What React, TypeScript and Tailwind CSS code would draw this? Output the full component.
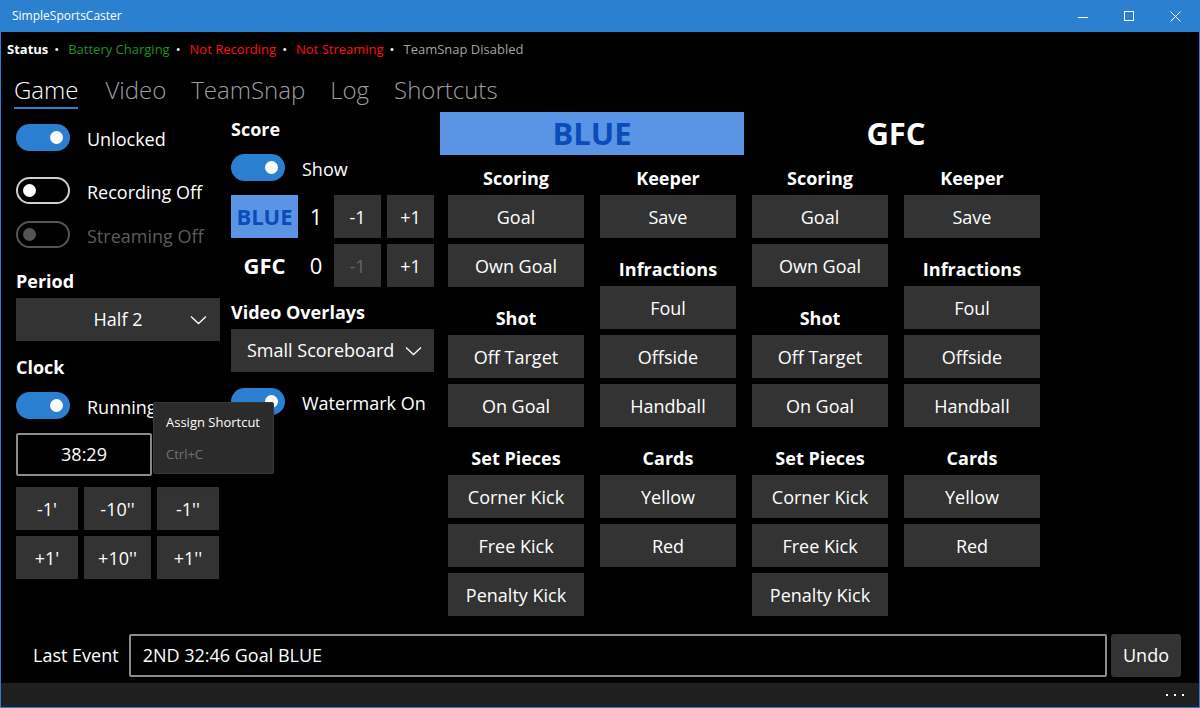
import React from "react";

function Toggle({ on, disabled }: { on?: boolean; disabled?: boolean }) {
  if (on) {
    return (
      <div className="w-[54px] h-[27px] rounded-full bg-[#2b7fd0] flex items-center justify-end pr-[7px] shrink-0">
        <div className="w-[13px] h-[13px] rounded-full bg-white" />
      </div>
    );
  }
  if (disabled) {
    return (
      <div className="w-[54px] h-[27px] rounded-full border-2 border-[#555555] flex items-center pl-[5px] shrink-0">
        <div className="w-[13px] h-[13px] rounded-full bg-[#555555]" />
      </div>
    );
  }
  return (
    <div className="w-[54px] h-[27px] rounded-full border-2 border-[#cfcfcf] flex items-center pl-[5px] shrink-0">
      <div className="w-[13px] h-[13px] rounded-full bg-white" />
    </div>
  );
}

function ToggleRow({ on, disabled, label, className }: { on?: boolean; disabled?: boolean; label: string; className?: string }) {
  return (
    <div className={"flex items-center h-[27px] " + (className ?? "")}>
      <Toggle on={on} disabled={disabled} />
      <span className={"ml-[17px] mt-[2px] text-[18px] leading-[26px] whitespace-nowrap " + (disabled ? "text-[#5c5c5c]" : "text-white")}>{label}</span>
    </div>
  );
}

function Btn({ children, className, disabled }: { children: React.ReactNode; className?: string; disabled?: boolean }) {
  return (
    <div
      className={
        "h-[43px] bg-[#333333] flex items-center justify-center text-[18px] leading-[26px] whitespace-nowrap " +
        (disabled ? "text-[#666666] " : "text-white ") +
        (className ?? "")
      }
    >
      {children}
    </div>
  );
}

function Chevron() {
  return (
    <svg width="17" height="10" viewBox="0 0 17 10" className="shrink-0">
      <polyline points="1,1.5 8.5,8.5 16,1.5" fill="none" stroke="white" strokeWidth="1.3" />
    </svg>
  );
}

function Heading({ children, className }: { children: React.ReactNode; className?: string }) {
  return <div className={"text-[18px] leading-[26px] font-bold text-white " + (className ?? "")}>{children}</div>;
}

function GroupLabel({ children, first }: { children: React.ReactNode; first?: boolean }) {
  return (
    <div
      className={
        (first ? "h-[40px] " : "h-[48px] ") +
        "flex items-end justify-center pb-[4px] text-[18px] leading-[26px] font-bold text-white whitespace-nowrap"
      }
    >
      {children}
    </div>
  );
}

function Group({ label, items, first }: { label: string; items: string[]; first?: boolean }) {
  return (
    <div className="flex flex-col">
      <GroupLabel first={first}>{label}</GroupLabel>
      <div className="flex flex-col gap-[6px]">
        {items.map((it) => (
          <Btn key={it}>{it}</Btn>
        ))}
      </div>
    </div>
  );
}

function Team({ name, highlighted }: { name: string; highlighted?: boolean }) {
  return (
    <div className="w-[304px] flex flex-col">
      <div
        className={
          "h-[43px] flex items-center justify-center text-[31px] font-bold leading-none " +
          (highlighted ? "bg-[#5a95e5] text-[#0b4cb8]" : "text-white")
        }
      >
        {name}
      </div>
      <div className="flex gap-[16px] px-[8px]">
        <div className="w-[136px] flex flex-col">
          <Group first label="Scoring" items={["Goal", "Own Goal"]} />
          <Group label="Shot" items={["Off Target", "On Goal"]} />
          <Group label="Set Pieces" items={["Corner Kick", "Free Kick", "Penalty Kick"]} />
        </div>
        <div className="w-[136px] flex flex-col">
          <Group first label="Keeper" items={["Save"]} />
          <Group label="Infractions" items={["Foul", "Offside", "Handball"]} />
          <Group label="Cards" items={["Yellow", "Red"]} />
        </div>
      </div>
    </div>
  );
}

function Sep() {
  return <span className="text-white ml-[6px] mr-[9px]">•</span>;
}

export default function App() {
  return (
    <div className="relative w-[1200px] h-[708px] bg-black border-x border-b border-[#2b80d0] flex flex-col font-['Open_Sans',sans-serif] overflow-hidden">
      {/* Title bar */}
      <div className="h-[32px] bg-[#2b80d0] flex items-center shrink-0">
        <span className="ml-[11px] text-[12px] text-white">SimpleSportsCaster</span>
        <div className="ml-auto flex items-center h-full">
          <div className="w-[46px] h-full flex items-center justify-center">
            <div className="w-[10px] h-px bg-white mt-[2px]" />
          </div>
          <div className="w-[46px] h-full flex items-center justify-center">
            <div className="w-[10px] h-[10px] border border-white" />
          </div>
          <div className="w-[46px] h-full flex items-center justify-center mr-[1px]">
            <svg width="11" height="11" viewBox="0 0 11 11">
              <path d="M0.5 0.5 L10.5 10.5 M10.5 0.5 L0.5 10.5" stroke="white" strokeWidth="1" />
            </svg>
          </div>
        </div>
      </div>

      {/* Status */}
      <div className="pt-[8px] pl-[6px] h-[26px] flex items-center text-[13px] leading-[18px] whitespace-nowrap">
        <span className="font-bold text-white">Status</span>
        <Sep />
        <span className="text-[#1d931d]">Battery Charging</span>
        <Sep />
        <span className="text-[#ff1010]">Not Recording</span>
        <Sep />
        <span className="text-[#ff1010]">Not Streaming</span>
        <Sep />
        <span className="text-[#a3a3a3]">TeamSnap Disabled</span>
      </div>

      {/* Tabs */}
      <div className="mt-[16px] pl-[11px] flex gap-[25px] text-[24px] leading-[32px] font-light">
        <div className="flex flex-col px-[2px]">
          <span className="text-white">Game</span>
          <div className="mt-[1px] h-[2px] bg-[#2b80d0]" />
        </div>
        <span className="text-[#9f9f9f]">Video</span>
        <span className="text-[#9f9f9f]">TeamSnap</span>
        <span className="text-[#9f9f9f]">Log</span>
        <span className="text-[#9f9f9f]">Shortcuts</span>
      </div>

      {/* Main */}
      <div className="mt-[3px] pl-[15px] flex">
        {/* Left column */}
        <div className="w-[204px] flex flex-col">
          <ToggleRow on label="Unlocked" className="mt-[12px]" />
          <ToggleRow label="Recording Off" className="mt-[26px]" />
          <ToggleRow disabled label="Streaming Off" className="mt-[17px]" />
          <Heading className="mt-[20px]">Period</Heading>
          <div className="mt-[4px] h-[43px] bg-[#333333] relative flex items-center justify-center text-[18px] text-white">
            <span>Half 2</span>
            <div className="absolute right-[13px] top-[17px] flex">
              <Chevron />
            </div>
          </div>
          <Heading className="mt-[13px]">Clock</Heading>
          <ToggleRow on label="Running" className="mt-[12px]" />
          <div className="mt-[14px] w-[136px] h-[43px] border-2 border-[#8c8c8c] rounded-[2px] flex items-center justify-center text-[18px] text-white">
            38:29
          </div>
          <div className="mt-[11px] grid grid-cols-[62px_67px_62px] gap-[6px]">
            <Btn>-1'</Btn>
            <Btn>-10''</Btn>
            <Btn>-1''</Btn>
            <Btn>+1'</Btn>
            <Btn>+10''</Btn>
            <Btn>+1''</Btn>
          </div>
        </div>

        {/* Middle column */}
        <div className="ml-[11px] w-[203px] flex flex-col">
          <Heading className="mt-[4px]">Score</Heading>
          <ToggleRow on label="Show" className="mt-[12px]" />
          <div className="mt-[14px] flex h-[43px]">
            <div className="w-[67px] bg-[#5a95e5] flex items-center justify-center text-[22px] font-bold text-[#0b4cb8]">BLUE</div>
            <div className="w-[36px] flex items-center justify-center text-[22px] text-white">1</div>
            <Btn className="w-[47px]">-1</Btn>
            <Btn className="w-[47px] ml-[6px]">+1</Btn>
          </div>
          <div className="mt-[6px] flex h-[43px]">
            <div className="w-[67px] flex items-center justify-center text-[22px] font-bold text-white">GFC</div>
            <div className="w-[36px] flex items-center justify-center text-[22px] text-white">0</div>
            <Btn disabled className="w-[47px]">-1</Btn>
            <Btn className="w-[47px] ml-[6px]">+1</Btn>
          </div>
          <Heading className="mt-[12px]">Video Overlays</Heading>
          <div className="mt-[4px] h-[43px] bg-[#333333] flex items-center pl-[16px] pr-[12px] text-[18px] text-white">
            <span className="flex-1 whitespace-nowrap">Small Scoreboard</span>
            <Chevron />
          </div>
          <ToggleRow on label="Watermark On" className="mt-[16px]" />
        </div>

        {/* Teams */}
        <div className="ml-[6px] flex">
          <Team name="BLUE" highlighted />
          <Team name="GFC" />
        </div>
      </div>

      <div className="flex-1" />

      {/* Last event */}
      <div className="h-[43px] flex items-center pl-[32px] pr-[18px] mb-[6px]">
        <span className="text-[18px] text-white whitespace-nowrap">Last Event</span>
        <div className="ml-[10px] flex-1 h-full border-2 border-[#8c8c8c] rounded-[2px] flex items-center pl-[12px] text-[18px] text-white">
          2ND 32:46 Goal BLUE
        </div>
        <div className="ml-[4px] w-[70px] h-full bg-[#333333] rounded-[3px] flex items-center justify-center text-[18px] text-white">
          Undo
        </div>
      </div>

      {/* Bottom bar */}
      <div className="h-[24px] bg-[#1f1f1f] flex items-center justify-end pr-[15px] gap-[6px] shrink-0">
        <div className="w-[2px] h-[2px] bg-white" />
        <div className="w-[2px] h-[2px] bg-white" />
        <div className="w-[2px] h-[2px] bg-white" />
      </div>

      {/* Context tooltip */}
      <div className="absolute left-[152px] top-[402px] w-[121px] h-[72px] bg-[#2b2b2b] border border-[#383838] rounded-[2px] shadow-lg flex flex-col pl-[12px] text-[13px]">
        <span className="mt-[9px] leading-[20px] text-white">Assign Shortcut</span>
        <span className="mt-[12px] leading-[20px] text-[#737373]">Ctrl+C</span>
      </div>
    </div>
  );
}
